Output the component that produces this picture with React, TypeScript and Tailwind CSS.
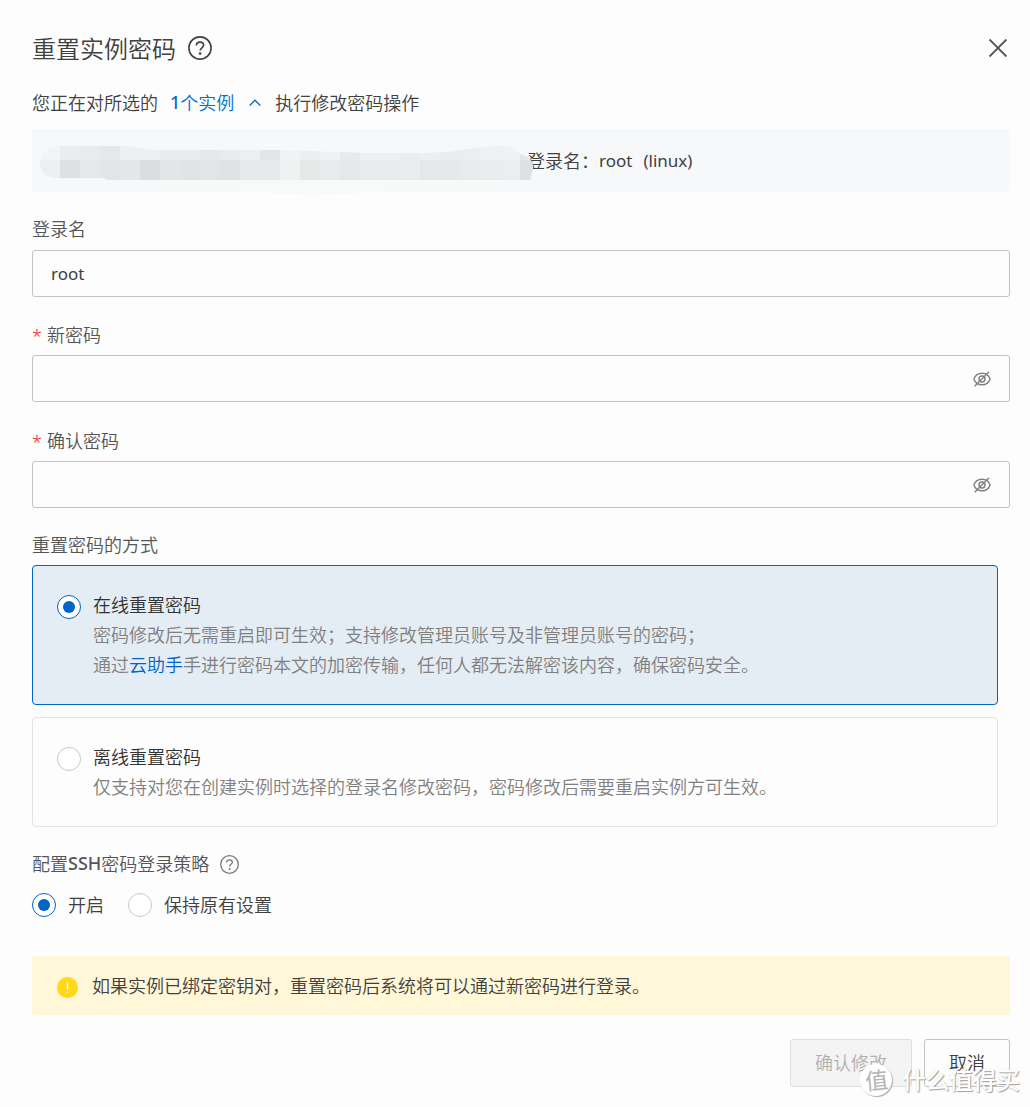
import { useState } from "react"
import type { ReactNode } from "react"

const TOP_CELLS = [
  "#f3f4f6", "#ebecee", "#e9eaec", "#e6e7e9", "#eeeff2", "#eeeff1", "#e9eaec", "#e9eaec",
  "#e6e7e9", "#e9eaec", "#eeeff1", "#e3e4e6", "#f1f2f4", "#edeeef", "#f0f1f3", "#e9eaeb",
  "#eeeff0", "#eff0f2", "#ebecee", "#edeeef", "#ebecee", "#ecedef", "#eff0f3", "#f0f1f4", "#e6e7ea",
]

const BOTTOM_CELLS = [
  "#eeeff1", "#dfe0e2", "#e6e7e9", "#e3e4e6", "#e5e6e8", "#dcdde0", "#e4e5e7", "#e2e3e5",
  "#e3e4e6", "#e1e2e4", "#e8e9eb", "#e8e9eb", "#f0f1f3", "#e7e8e8", "#e9eaeb", "#e6e7e8",
  "#eaebec", "#e9eaeb", "#ebeced", "#e6e7e9", "#e7e8ea", "#e9eaec", "#ebecee", "#ecedef", "#dfe0e3",
]

function Redacted() {
  return (
    <svg className="pointer-events-none absolute top-0 left-0" width="510" height="68" viewBox="32 129 510 68">
      <path d="M110 180H525V181C470 185 430 189 392 190C360 192 345 195 310 195C270 194 240 190 200 187Z" fill="#f8faf9" />
      <clipPath id="smudge">
        <path d="M60 146H123L155 150H279L340 152L370 153H420L448 152L488 146.500Q506 144.500 513 148L520 154Q534 157 533 169L530 180H108L103 178H53Q40 175 40 163Q42 147 60 146Z" />
      </clipPath>
      <g clipPath="url(#smudge)" shapeRendering="crispEdges">
        {TOP_CELLS.map((fill, i) => (
          <rect key={i} x={40 + i * 20} y="140" width="20" height="20" fill={fill} />
        ))}
        {BOTTOM_CELLS.map((fill, i) => (
          <rect key={i} x={40 + i * 20} y="160" width="20" height="20" fill={fill} />
        ))}
      </g>
    </svg>
  )
}

function HelpIcon({ className }: { className: string }) {
  return (
    <svg className={className} viewBox="0 0 24 24" fill="none" stroke="currentColor" strokeWidth="1.6">
      <circle cx="12" cy="12" r="11.100" />
      <path d="M8.400 9.600C8.400 7.400 10 6.100 12 6.100S15.600 7.400 15.600 9.300C15.600 11.700 12.100 11.900 12.100 14.600" />
      <circle cx="12.100" cy="17.600" r="1.300" fill="currentColor" stroke="none" />
    </svg>
  )
}

function EyeOffIcon() {
  return (
    <svg className="h-[18px] w-[18px] text-[#808080]" viewBox="0 0 18 18" fill="none" stroke="currentColor" strokeWidth="1.400">
      <path d="M.900 9C2.300 5 5.500 3.200 9 3.200S15.700 5 17.100 9C15.700 13 12.500 14.800 9 14.800S2.300 13 .900 9Z" />
      <circle cx="9" cy="9" r="3" />
      <path d="M1.700 16.200L16 1.800" />
    </svg>
  )
}

function Radio({ checked }: { checked: boolean }) {
  return (
    <span
      className={`flex h-6 w-6 shrink-0 items-center justify-center rounded-full border bg-white ${checked ? "border-[#0064c8]" : "border-[#c8c8c8]"}`}
    >
      {checked && <span className="h-3 w-3 rounded-full bg-[#0064c8]" />}
    </span>
  )
}

function PasswordField({ label, className }: { label: string; className: string }) {
  return (
    <div className={className}>
      <label className="flex h-[30px] items-center text-[#555]">
        <span className="w-[15px] pt-1 font-['Noto_Sans'] text-[18px] text-[#f02020]">*</span>
        {label}
      </label>
      <div className="mt-[6px] flex h-[47px] items-center rounded-[3px] border border-[#c3c3c3] pr-[18px]">
        <input type="password" aria-label={label} className="h-full min-w-0 flex-1 px-[18px] outline-none" />
        <EyeOffIcon />
      </div>
    </div>
  )
}

interface MethodCardProps {
  title: string
  checked: boolean
  onSelect: () => void
  className: string
  children: ReactNode
}

function MethodCard({ title, checked, onSelect, className, children }: MethodCardProps) {
  return (
    <div
      className={`flex w-[966px] cursor-pointer gap-3 rounded border pl-6 ${checked ? "border-[#0064c8] bg-[#e4ecf4]" : "border-[#e3e3e3]"} ${className}`}
      onClick={onSelect}
    >
      <div className="pt-[29px]">
        <Radio checked={checked} />
      </div>
      <div className="pt-[23px] leading-[30px] whitespace-nowrap text-[#808080]">
        <div className="text-[#333]">{title}</div>
        {children}
      </div>
    </div>
  )
}

export default function App() {
  const [method, setMethod] = useState("online")
  const [ssh, setSsh] = useState("on")

  return (
    <div className="relative h-[1107px] w-[1030px] overflow-hidden bg-[#fdfdfd] pt-8 pr-5 pl-8 font-['Noto_Sans_CJK_SC',sans-serif] text-[18px] leading-[30px] font-[350] text-[#404040]">
      <header className="flex h-9 items-center">
        <h1 className="pb-[4px] text-2xl font-[350]">重置实例密码</h1>
        <HelpIcon className="mb-1 ml-3 h-6 w-6" />
        <svg className="mr-[3px] mb-1 ml-auto h-[18px] w-[18px] text-[#505050]" viewBox="0 0 18 18" stroke="currentColor" strokeWidth="1.900">
          <path d="M.500.500L17.500 17.500M17.500.500L.500 17.500" />
        </svg>
      </header>

      <div className="mt-[19px] flex h-[30px] items-center">
        您正在对所选的
        <a className="ml-3 flex items-center text-[#0070cc]">
          <span className="font-['Noto_Sans','Noto_Sans_CJK_SC'] font-medium">1</span>个实例
          <svg className="mr-[14px] ml-[15px] h-3 w-3" viewBox="0 0 12 12" fill="none" stroke="currentColor" strokeWidth="1.300">
            <path d="M.700 9.500L6 4.200L11.300 9.500" />
          </svg>
        </a>
        执行修改密码操作
      </div>

      <div className="relative mt-3 flex h-[63px] items-center rounded-[3px] bg-[#f7f8fa] pl-[495px]">
        <span className="pb-0.5">登录名：</span>
        <span className="font-['Noto_Sans'] text-[17px] font-normal">root</span>
        <span className="ml-[11px] font-['Noto_Sans'] text-[17px] font-normal">(linux)</span>
        <Redacted />
      </div>

      <div className="mt-[21px]">
        <label className="flex h-[30px] items-center text-[#555]">登录名</label>
        <input
          defaultValue="root"
          aria-label="登录名"
          className="mt-[7px] block h-[47px] w-full rounded-[3px] border border-[#c3c3c3] px-[18px] font-['Noto_Sans'] text-[17px] font-normal outline-none"
        />
      </div>
      <PasswordField label="新密码" className="mt-[22px]" />
      <PasswordField label="确认密码" className="mt-[23px]" />

      <div className="mt-[21px] text-[#555]">重置密码的方式</div>
      <MethodCard
        title="在线重置密码"
        checked={method === "online"}
        onSelect={() => setMethod("online")}
        className="mt-[6px] h-[140px]"
      >
        <p>密码修改后无需重启即可生效；支持修改管理员账号及非管理员账号的密码；</p>
        <p>
          通过<a className="text-[#0064c8]">云助手</a>手进行密码本文的加密传输，任何人都无法解密该内容，确保密码安全。
        </p>
      </MethodCard>
      <MethodCard
        title="离线重置密码"
        checked={method === "offline"}
        onSelect={() => setMethod("offline")}
        className="mt-3 h-[110px]"
      >
        <p>仅支持对您在创建实例时选择的登录名修改密码，密码修改后需要重启实例方可生效。</p>
      </MethodCard>

      <div className="mt-[21px] flex h-[30px] items-center text-[#555]">
        配置<span className="font-['Noto_Sans'] text-[18px] font-medium">SSH</span>密码登录策略
        <HelpIcon className="mt-0.5 ml-[11px] h-[19px] w-[19px] text-[#777]" />
      </div>
      <div className="mt-3 flex h-[30px] items-center">
        <button className="flex items-center gap-3" onClick={() => setSsh("on")}>
          <Radio checked={ssh === "on"} />
          <span className="pb-0.5">开启</span>
        </button>
        <button className="ml-6 flex items-center gap-3" onClick={() => setSsh("keep")}>
          <Radio checked={ssh === "keep"} />
          <span className="pb-0.5">保持原有设置</span>
        </button>
      </div>

      <div className="mt-9 flex h-[59px] items-center rounded-[3px] bg-[#fff7d8] pl-[25px]">
        <svg className="mt-1 mr-[14px] h-[21px] w-[21px]" viewBox="0 0 21 21">
          <circle cx="10.500" cy="10.500" r="10.500" fill="#ffd91a" />
          <path d="M10.500 5.500V12.500M10.500 14.500V16.200" stroke="#fffbe0" strokeWidth="1.500" />
        </svg>
        <span className="pb-px">如果实例已绑定密钥对，重置密码后系统将可以通过新密码进行登录。</span>
      </div>

      <footer className="mt-6 flex justify-end gap-3">
        <button className="h-12 w-[122px] rounded-[3px] border border-[#dedede] bg-[#f4f4f4] pb-[3px] text-[#b0b0b0]">确认修改</button>
        <button className="h-12 w-[86px] rounded-[3px] border border-[#c3c3c3] pb-[3px]">取消</button>
      </footer>

      {/* site watermark */}
      <div className="pointer-events-none absolute top-[1063px] left-[860px] flex items-center text-white">
        <span className="flex h-8 w-8 items-center justify-center rounded-full bg-white text-[23px] leading-none font-normal text-[#b4b4b4] shadow-[1px_1px_1px_#aaa]">
          <span className="-rotate-6 pb-0.5">值</span>
        </span>
        <span className="ml-[10px] pb-0.5 text-[24px] leading-8 font-medium tracking-[-0.5px] [text-shadow:1px_1px_1px_#a0a0a0,0_0_1px_#ccc]">什么值得买</span>
      </div>
    </div>
  )
}
